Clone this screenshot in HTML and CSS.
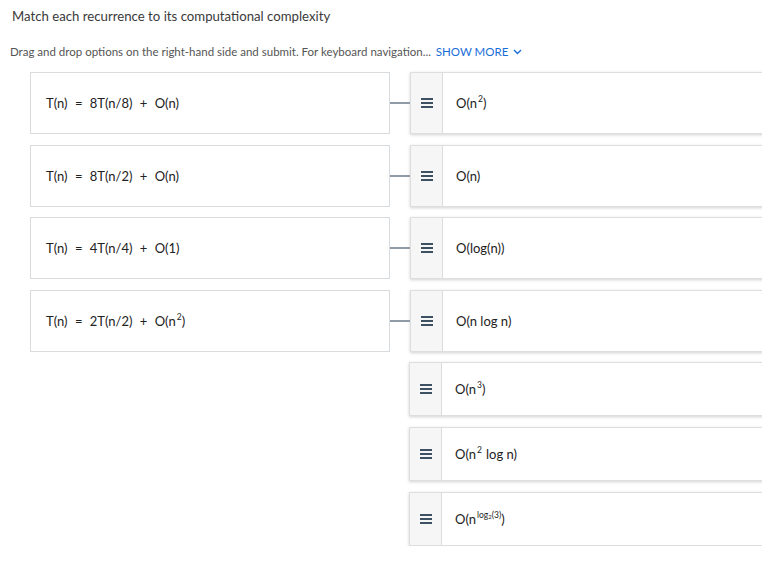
FILE: index.html
```html
<!DOCTYPE html>
<html>
<head>
<meta charset="utf-8">
<link rel="stylesheet" href="styles.css">
</head>
<body>
<div class="page">
  <h1 class="title">Match each recurrence to its computational complexity</h1>
  <p class="instr">Drag and drop options on the right-hand side and submit. For keyboard navigation... <span class="more">SHOW MORE <svg class="chev" width="9" height="6" viewBox="0 0 9 6"><path d="M1 1 L4.5 4.5 L8 1" fill="none" stroke="#1a6ed8" stroke-width="1.4"/></svg></span></p>

  <div class="rows">
    <div class="row tall">
      <div class="prompt"><span class="m">T(n) <i class="op">=</i> 8T(n/8) <i class="op">+</i> O(n)</span></div>
      <div class="link"></div>
      <div class="card"><div class="handle"><span class="bars"></span></div><div class="ans"><span>O(n<sup>2</sup>)</span></div></div>
    </div>
    <div class="row tall">
      <div class="prompt"><span class="m">T(n) <i class="op">=</i> 8T(n/2) <i class="op">+</i> O(n)</span></div>
      <div class="link"></div>
      <div class="card"><div class="handle"><span class="bars"></span></div><div class="ans"><span>O(n)</span></div></div>
    </div>
    <div class="row tall">
      <div class="prompt"><span class="m">T(n) <i class="op">=</i> 4T(n/4) <i class="op">+</i> O(1)</span></div>
      <div class="link"></div>
      <div class="card"><div class="handle"><span class="bars"></span></div><div class="ans"><span>O(log(n))</span></div></div>
    </div>
    <div class="row tall">
      <div class="prompt"><span class="m">T(n) <i class="op">=</i> 2T(n/2) <i class="op">+</i> O(n<sup>2</sup>)</span></div>
      <div class="link"></div>
      <div class="card"><div class="handle"><span class="bars"></span></div><div class="ans"><span>O(n log n)</span></div></div>
    </div>
    <div class="row short">
      <div class="spacer"></div>
      <div class="nolink"></div>
      <div class="card"><div class="handle"><span class="bars"></span></div><div class="ans"><span>O(n<sup>3</sup>)</span></div></div>
    </div>
    <div class="row short">
      <div class="spacer"></div>
      <div class="nolink"></div>
      <div class="card"><div class="handle"><span class="bars"></span></div><div class="ans"><span>O(n<sup class="sp">2</sup>log n)</span></div></div>
    </div>
    <div class="row short">
      <div class="spacer"></div>
      <div class="nolink"></div>
      <div class="card"><div class="handle"><span class="bars"></span></div><div class="ans"><span>O(n<sup class="lg">log<sub>2</sub>(3)</sup>)</span></div></div>
    </div>
  </div>
</div>
</body>
</html>
```

FILE: styles.css
```css
html, body {
  margin: 0;
  padding: 0;
  background: #ffffff;
  overflow: hidden;
}
body {
  font-family: Lato, "Noto Sans", sans-serif;
  color: #333;
}
.page {
  width: 780px;
  padding-top: 7px;
}
.title {
  margin: 0 0 0 12px;
  font-size: 13.2px;
  font-weight: 400;
  color: #3a3a3a;
  line-height: 18px;
}
.instr {
  margin: 20px 0 0 10px;
  font-size: 11.5px;
  color: #555;
  line-height: 14px;
}
.more {
  color: #1a6ed8;
  margin-left: 2px;
}
.chev {
  margin-left: 2px;
  vertical-align: 1px;
}
.rows {
  margin: 13px 0 0 30px;
  display: flex;
  flex-direction: column;
  gap: 10.6px;
}
.row {
  display: flex;
  align-items: stretch;
}
.row.tall { height: 62px; }
.row.short { height: 54px; }
.prompt {
  border: 1px solid #d9dcdf;
  display: flex;
  align-items: center;
  padding-left: 15px;
  box-sizing: border-box;
  width: 360px;
}
.m {
  font-size: 13px;
  color: #222;
}
.op {
  font-style: normal;
  margin: 0 4px;
}
.spacer { width: 360px; }
.link {
  width: 20px;
  position: relative;
}
.link::before {
  content: "";
  position: absolute;
  left: 0;
  right: 0;
  top: 50%;
  margin-top: -1px;
  height: 2px;
  background: #8f9ba6;
}
.nolink { width: 19px; }
.card {
  flex: 1;
  display: flex;
  border: 1px solid #dedede;
  box-shadow: 0 1px 3px rgba(0,0,0,0.18);
  background: #fff;
}
.handle {
  width: 31px;
  background: #f6f6f6;
  border-right: 1px solid #dcdcdc;
  display: flex;
  align-items: center;
  justify-content: center;
}
.bars {
  width: 12px;
  border-top: 2px solid #3e5162;
  border-bottom: 2px solid #3e5162;
  position: relative;
  box-sizing: border-box;
  height: 10px;
}
.bars::after {
  content: "";
  position: absolute;
  left: 0;
  right: 0;
  top: 2px;
  height: 2px;
  background: #3e5162;
}
.ans {
  display: flex;
  align-items: center;
  padding-left: 13px;
  font-size: 13px;
  color: #222;
}
sup {
  font-size: 8.5px;
  vertical-align: 6px;
  line-height: 0;
  margin-left: 1px;
}
sup.sp { margin-right: 4px; }
sup.lg { font-size: 8.5px; }
sub {
  font-size: 6px;
  vertical-align: -1px;
  line-height: 0;
}
```
